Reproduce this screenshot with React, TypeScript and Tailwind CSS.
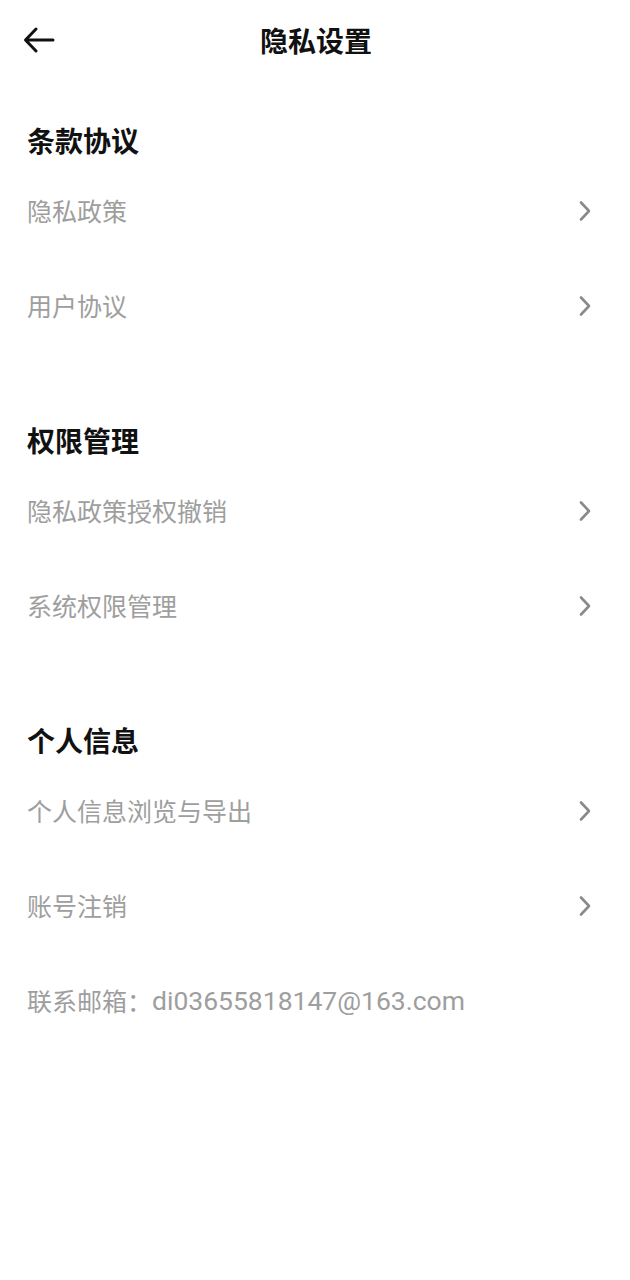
const sections = [
  { title: '条款协议', items: ['隐私政策', '用户协议'] },
  { title: '权限管理', items: ['隐私政策授权撤销', '系统权限管理'] },
  { title: '个人信息', items: ['个人信息浏览与导出', '账号注销'] },
]

function Chevron() {
  return (
    <svg width="14" height="22" viewBox="0 0 14 22" fill="none" className="shrink-0">
      <path d="M3 2.5 L11 11 L3 19.5" stroke="#8a8a8a" strokeWidth="2.6" strokeLinecap="round" strokeLinejoin="round" />
    </svg>
  )
}

export default function App() {
  return (
    <div
      className="min-h-[1280px] w-[630px] bg-white"
      style={{ fontFamily: '"Noto Sans CJK SC", "Noto Sans", sans-serif' }}
    >
      <header className="relative flex h-[84px] items-center justify-center pb-[4px]">
        <button className="absolute left-[22px] top-[26px]">
          <svg width="34" height="28" viewBox="0 0 34 28" fill="none">
            <path d="M31 14 H5 M14 3 L3.5 14 L14 25" stroke="#111" strokeWidth="3" strokeLinecap="round" strokeLinejoin="round" />
          </svg>
        </button>
        <h1 className="pl-[2px] text-[28px] font-bold leading-none text-[#111]">隐私设置</h1>
      </header>

      <main className="flex flex-col gap-[69px] pt-[38px]">
        {sections.map((section) => (
          <section key={section.title}>
            <h2 className="flex h-[41px] items-center px-[27px] pb-[5px] text-[28px] font-bold text-[#111]">
              {section.title}
            </h2>
            {section.items.map((item) => (
              <div key={item} className="flex h-[95px] items-center justify-between pl-[27px] pr-[38px]">
                <span className="text-[25px] text-[#9e9e9e]">{item}</span>
                <Chevron />
              </div>
            ))}
          </section>
        ))}
      </main>

      <div className="flex h-[95px] items-center px-[27px] text-[25px] text-[#9e9e9e]">
        <span>联系邮箱：</span>
        <span className="text-[26.5px]" style={{ fontFamily: 'Roboto, "Noto Sans CJK SC", sans-serif' }}>
          di03655818147@163.com
        </span>
      </div>
    </div>
  )
}
